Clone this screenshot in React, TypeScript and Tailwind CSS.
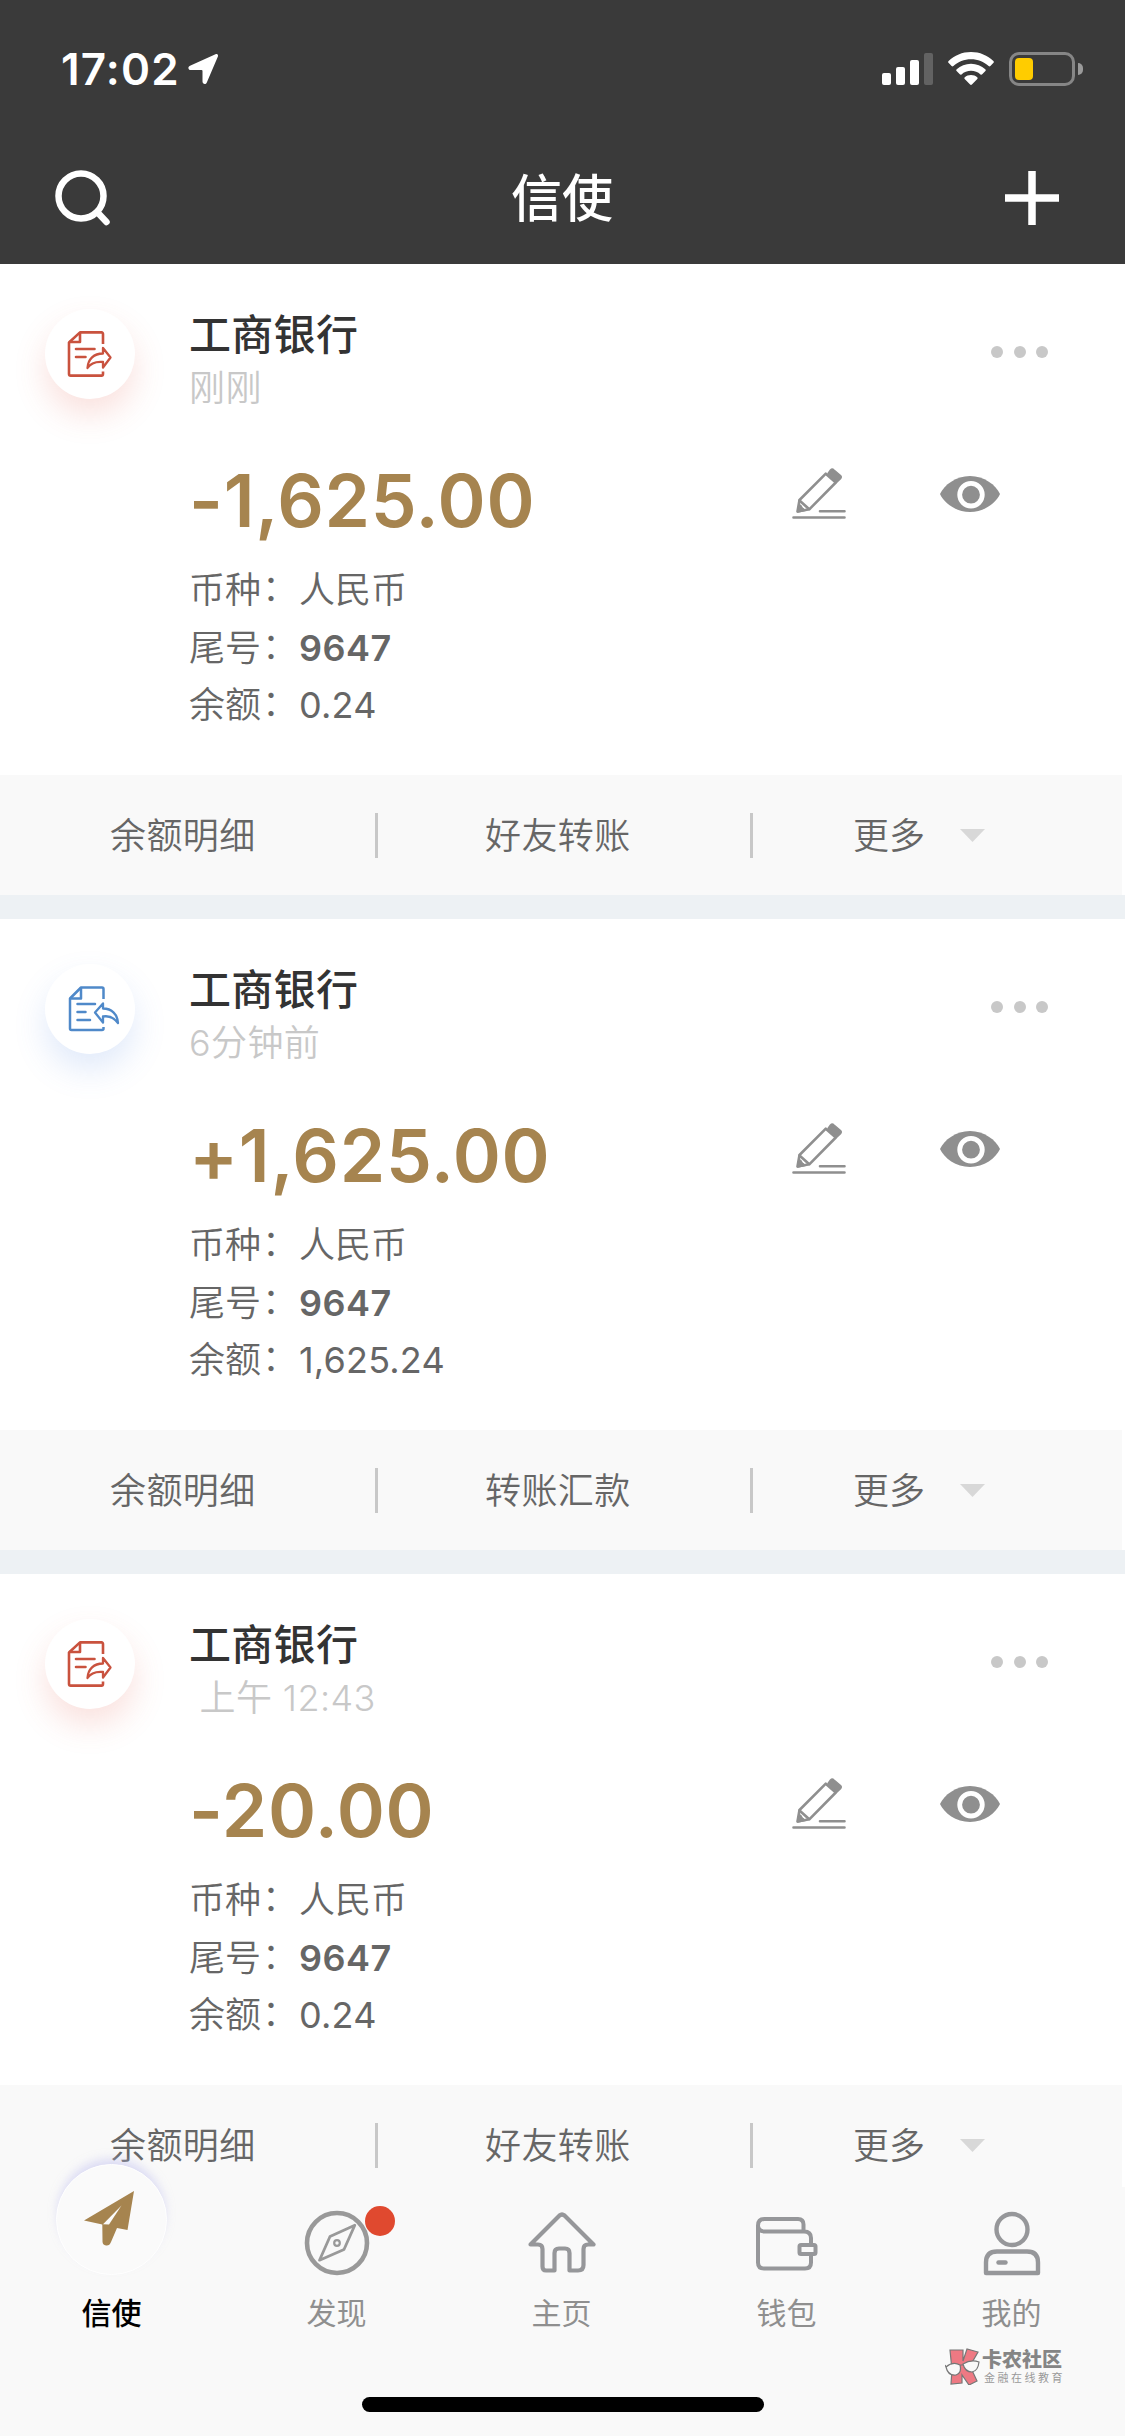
import React from "react";

type Message = {
  kind: "out" | "in";
  time: string;
  amount: string;
  balance: string;
  action: string;
};

const messages: Message[] = [
  { kind: "out", time: "刚刚", amount: "-1,625.00", balance: "0.24", action: "好友转账" },
  { kind: "in", time: "6分钟前", amount: "+1,625.00", balance: "1,625.24", action: "转账汇款" },
  { kind: "out", time: " 上午 12:43", amount: "-20.00", balance: "0.24", action: "好友转账" },
];

function StatusBar() {
  return (
    <div className="flex h-[136px] items-start justify-between pl-[61px] pr-[42px] pt-[52px]">
      <div className="flex h-[34px] items-center">
        <span className="w-[127px] text-[44px] font-semibold leading-[34px] tracking-[1.200px]">17:02</span>
        <svg width="31" height="32" viewBox="0 0 31 32" fill="white" className="-mt-px">
          <path d="M27.5 1.2 2 12.8C-.6 14 .2 17 2.800 17H13.500Q14.500 17 14.500 18V28.500C14.500 31.200 17.800 31.800 18.800 29.400L29.800 3.800C30.600 1.800 29.200.5 27.500 1.200Z" />
        </svg>
      </div>
      <div className="flex h-[34px] items-center">
        <div className="flex h-[32px] items-end gap-[5px]">
          <i className="h-[12px] w-[9px] rounded-[2px] bg-white" />
          <i className="h-[18px] w-[9px] rounded-[2px] bg-white" />
          <i className="h-[25px] w-[9px] rounded-[2px] bg-white" />
          <i className="h-[32px] w-[9px] rounded-[2px] bg-[#626262]" />
        </div>
        <svg width="46" height="34" viewBox="0 0 46 34" fill="white" className="ml-[15px]">
          <path d="M23 0C14.300 0 6.400 3.400.6 8.900c-.6.600-.6 1.300-.1 1.900l3.100 3.200c.5.500 1.200.5 1.800 0C10 9.700 16.200 7.200 23 7.200s13 2.500 17.600 6.800c.6.500 1.300.5 1.800 0l3.100-3.200c.5-.6.5-1.300-.1-1.900C39.600 3.400 31.700 0 23 0Z" />
          <path d="M23 11.700c-5.500 0-10.500 2.100-14.300 5.500-.6.600-.6 1.300-.1 1.800l3.200 3.300c.5.500 1.200.5 1.700.1 2.500-2.200 5.900-3.600 9.500-3.600s7 1.400 9.500 3.600c.5.400 1.200.4 1.700-.1l3.200-3.300c.5-.5.500-1.200-.1-1.800-3.800-3.400-8.800-5.500-14.300-5.500Z" />
          <path d="M23 22.900c-2.400 0-4.600.9-6.200 2.300-.6.500-.6 1.200-.1 1.700l5.400 5.600c.6.600 1.200.6 1.800 0l5.400-5.600c.5-.5.500-1.200-.1-1.700-1.600-1.400-3.800-2.300-6.200-2.300Z" />
        </svg>
        <div className="ml-[15px] flex h-[34px] w-[66px] items-center rounded-[10px] border-[3px] border-[#868686] pl-[3px]">
          <i className="h-[22px] w-[18px] rounded-[4px] bg-[#ffcc00]" />
        </div>
        <i className="ml-[3px] h-[12px] w-[5px] rounded-r-full bg-[#9a9a9a]" />
      </div>
    </div>
  );
}

function Header() {
  return (
    <header className="h-[265px] border-b border-[#b5b5b5] bg-[#3a3a3a] text-white">
      <StatusBar />
      <div className="flex h-[124px] items-center justify-between pl-[55px] pr-[66px]">
        <div className="w-[64px]">
          <svg width="56" height="56" viewBox="0 0 56 56" fill="none" stroke="white" strokeWidth="6.500" strokeLinecap="round">
            <circle cx="26" cy="26" r="22.500" />
            <path d="m44 44 7.500 8" />
          </svg>
        </div>
        <h1 className="pt-[2px] text-[51px] font-medium leading-[60px]">信使</h1>
        <svg width="54" height="54" viewBox="0 0 54 54" stroke="white" strokeWidth="7.500">
          <path d="M27 0V54M0 27H54" />
        </svg>
      </div>
    </header>
  );
}

function OutIcon() {
  return (
    <svg width="54" height="46" viewBox="0 0 54 46" fill="none" stroke="#c9523e" strokeWidth="2.600" strokeLinejoin="round" strokeLinecap="butt">
      <path d="M36 13V3Q36 1.400 34.500 1.400H13L2 11.500V43Q2 44.600 3.700 44.600H34.500Q36 44.600 36 43V40.500" />
      <path d="M13 1.400V11H2" />
      <path d="M9 18H27.500M9 26H18.500" strokeLinecap="round" />
      <path d="M36 17 43.500 26.500 36 36.500V31C30 30.500 24 31.500 20.500 37C21 28 27 22.500 36 22.500Z" strokeWidth="2.300" />
    </svg>
  );
}

function InIcon() {
  return (
    <svg width="54" height="46" viewBox="0 0 54 46" fill="none" stroke="#4f89c9" strokeWidth="2.500" strokeLinejoin="round">
      <path d="M36.500 13V3Q36.500 1.500 35 1.500H14L3 12.500V42.500Q3 44 4.500 44H35Q36.500 44 36.500 42.500V41" />
      <path d="M14 1.500V12.500H3" />
      <path d="M10.500 18H28M10.500 26H18.500M10.500 34H23" strokeLinecap="round" />
      <path d="M36 17.500 28 26.500 36 36.500V30.500C42 29.500 47 31.500 51 37C50.500 28.500 45 22.500 36 22.500Z" strokeWidth="2.300" />
    </svg>
  );
}

function PencilIcon() {
  return (
    <svg width="54" height="52" viewBox="0 0 54 52" fill="none" stroke="#8f8f8f" strokeWidth="2.600" strokeLinejoin="round" strokeLinecap="round">
      <path d="M7.500 32 33.800 5.700 43.800 14.500 17.300 41.300 5.500 43.500Z" />
      <path d="M7.500 32.500 17 41" />
      <path d="M5.500 44 6.800 36.500Q9.500 36.500 10.200 39.500L13.500 42.300Z" fill="#8f8f8f" strokeWidth="1" />
      <path d="M36 5.500 38.500 2Q40.200.3 42 2L48.500 7.500Q50 9 48.500 10.800L44.500 14.500Z" fill="#8f8f8f" strokeWidth="1.500" />
      <path d="M28 43.300H52.500M1.500 49.500H52.500" />
    </svg>
  );
}

function EyeIcon() {
  return (
    <svg width="60" height="36" viewBox="0 0 60 36">
      <path d="M0 18C4 9 16 0 30 0S56 9 60 18C56 27 44 36 30 36S4 27 0 18Z" fill="#8f8f8f" />
      <circle cx="31" cy="18.700" r="11.300" fill="#8f8f8f" stroke="white" strokeWidth="4.800" />
    </svg>
  );
}

function InfoRow({ label, children }: { label: string; children: React.ReactNode }) {
  return (
    <div className="flex h-[57.500px] items-center text-[36px] leading-[57px] text-[#666]">
      <span className="w-[110px] font-[350]">
        {label}
        <span className="relative -top-[2px] left-px">：</span>
      </span>
      {children}
    </div>
  );
}

function Card({ m }: { m: Message }) {
  return (
    <article className="mb-[24px] bg-white">
      <div className="flex h-[511px]">
        <div className="w-[189px] shrink-0 pl-[45px] pt-[45px]">
          <div
            className={
              m.kind === "out"
                ? "flex size-[90px] items-center rounded-full bg-white pl-[22px] shadow-[0_16px_32px_rgba(226,90,70,0.180)]"
                : "flex size-[90px] items-center rounded-full bg-white pl-[22px] shadow-[0_16px_32px_rgba(90,140,226,0.180)]"
            }
          >
            {m.kind === "out" ? <OutIcon /> : <InIcon />}
          </div>
        </div>
        <div className="flex-1 pt-[43px]">
          <h2 className="h-[56px] text-[42px] font-medium leading-[56px] tracking-[0.300px] text-[#333]">工商银行</h2>
          <p className="h-[50px] whitespace-pre text-[36px] font-[350] leading-[50px] tracking-[0.400px] text-[#c8c8c8]">{m.time}</p>
          <p className="mt-[46px] h-[84px] whitespace-nowrap text-[73px] font-semibold leading-[84px] tracking-[0.700px] text-[#a6844f]">{m.amount}</p>
          <div className="mt-[19px]">
            <InfoRow label="币种">
              <span className="font-[350]">人民币</span>
            </InfoRow>
            <InfoRow label="尾号">
              <span className="font-semibold tracking-[0.500px]">9647</span>
            </InfoRow>
            <InfoRow label="余额">
              <span className="font-normal tracking-[0.200px]">{m.balance}</span>
            </InfoRow>
          </div>
        </div>
        <div className="w-[333px] shrink-0">
          <div className="flex justify-end gap-[10.500px] pr-[77px] pt-[82px]">
            <i className="size-[12px] rounded-full bg-[#c8c8c8]" />
            <i className="size-[12px] rounded-full bg-[#c8c8c8]" />
            <i className="size-[12px] rounded-full bg-[#c8c8c8]" />
          </div>
          <div className="mt-[110px] flex items-center gap-[94px]">
            <PencilIcon />
            <EyeIcon />
          </div>
        </div>
      </div>
      <div className="mr-[3px] flex h-[120px] items-center bg-[#f9f9f9] text-[36px] font-[350] leading-[60px] text-[#666]">
        <span className="w-[375px] pl-[110px] pt-[2px] tracking-[0.400px]">余额明细</span>
        <i className="h-[45px] w-[3px] bg-[#c8c8c8]" />
        <span className="w-[372px] pl-[107px] pt-[2px] tracking-[0.400px]">{m.action}</span>
        <i className="h-[45px] w-[3px] bg-[#c8c8c8]" />
        <span className="ml-[100px] pt-[2px]">更多</span>
        <svg width="25" height="13" viewBox="0 0 25 13" className="ml-[35px]">
          <path d="M0 0H25L12.500 13Z" fill="#d8d8d8" />
        </svg>
      </div>
    </article>
  );
}

function Compass() {
  return (
    <svg width="66" height="66" viewBox="0 0 66 66" fill="none" stroke="#999" strokeLinejoin="round">
      <circle cx="33" cy="33" r="30" strokeWidth="4.600" />
      <path d="M50.800 15.200 26 26.500 15.500 50.200 40 39.500Z" strokeWidth="2.800" />
      <circle cx="33" cy="33" r="2.800" strokeWidth="2.200" />
    </svg>
  );
}

function HomeIcon() {
  return (
    <svg width="68" height="62" viewBox="0 0 68 62" fill="none" stroke="#96979a" strokeWidth="4.200" strokeLinejoin="round">
      <path d="M31.500 3.500Q34 1.500 36.500 3.500L65.500 32.500H60Q55.500 32.500 55.500 37V53Q55.500 58.500 50 58.500H41.500V41Q41.500 36.500 37 36.500H31Q26.500 36.500 26.500 41V58.500H18Q14.500 58.500 14.500 54.500V37Q14.500 32.500 10 32.500H2.500Z" />
    </svg>
  );
}

function WalletIcon() {
  return (
    <svg width="62" height="54" viewBox="0 0 62 54" fill="none" stroke="#96979a" strokeWidth="4" className="mt-[2px]">
      <path d="M47.500 15V7.500Q47.500 2 42 2H8.500Q2 2 2 8.500V45.500Q2 51.500 8 51.500H49Q55 51.500 55 45.500V37M2 8.500Q2 14.500 9 14.500H48Q55 14.500 55 21V28" />
      <rect x="43.500" y="28" width="16" height="9" rx="1.500" />
    </svg>
  );
}

function UserIcon() {
  return (
    <svg width="58" height="66" viewBox="0 0 58 66" fill="none" stroke="#96979a" strokeWidth="4.400" strokeLinejoin="round" className="mt-[2px]">
      <circle cx="29" cy="18.500" r="15.500" />
      <path d="M3 62V51.500Q3 40.500 14 40.500H44Q55 40.500 55 51.500V62Z" />
      <path d="M15.500 51.500H22.500" strokeLinecap="round" />
    </svg>
  );
}

function Tab({ label, children }: { label: string; children: React.ReactNode }) {
  return (
    <div className="flex flex-1 flex-col items-center">
      <div className="relative flex h-[66px] items-center">{children}</div>
      <span className="mt-[15px] text-[30px] leading-[44px] text-[#8f8f8f]">{label}</span>
    </div>
  );
}

function Watermark() {
  return (
    <div className="absolute left-[945px] top-[161px] flex items-start gap-[2px]">
      <svg width="35" height="37" viewBox="0 0 35 37" stroke="#777" strokeWidth="1.200">
        <path d="M5 2H18V13L22 1 33 4 25 18 32 33 24 37 17 27V35L6 36 7 22Z" fill="#ee7983" />
        <path d="M1 19Q8 13 15 17Q17 25 11 27Q3 28 1 19ZM18 16Q26 11 34 14Q33 23 27 24Q20 24 18 16ZM15 17H18M0 17 1 19" fill="#f9f9f9" />
      </svg>
      <div className="flex flex-col pt-px">
        <span className="text-[20px] font-black leading-[23px] text-[#858585]">卡农社区</span>
        <span className="pl-[2px] text-[11px] leading-[12px] tracking-[2.500px] text-[#999]">金融在线教育</span>
      </div>
    </div>
  );
}

function TabBar() {
  return (
    <nav className="absolute inset-x-0 bottom-0 h-[249px] bg-[#f9f9f9]">
      <div className="-ml-px flex w-[1125px] pt-[23px]">
        <div className="flex flex-1 flex-col items-center">
          <div className="-mt-[46px] flex size-[111px] items-center justify-center rounded-full border border-white bg-[#fafafa] shadow-[0_-7px_10px_-2px_rgba(190,190,240,0.500)]">
            <svg width="50" height="55" viewBox="0 0 50 55" fill="#a6844f" className="-ml-[5px] -mt-[2px]">
              <path d="M50 0 43.500 39 33 37 27 51Q25.500 55 22 54.500 18.500 54 18.500 50.500L18.300 33.500 0 29.500Z" />
              <path d="M37.500 14.500 19 33.300 25 33.500Z" fill="#fafafa" />
            </svg>
          </div>
          <span className="mt-[16px] text-[30px] font-medium leading-[44px] text-black">信使</span>
        </div>
        <Tab label="发现">
          <Compass />
          <i className="absolute -top-[4px] left-[61px] size-[30px] rounded-full bg-[#e0492f]" />
        </Tab>
        <Tab label="主页"><HomeIcon /></Tab>
        <Tab label="钱包"><WalletIcon /></Tab>
        <Tab label="我的"><UserIcon /></Tab>
      </div>
      <Watermark />
      <div className="absolute bottom-[24px] left-[362px] h-[15px] w-[402px] rounded-full bg-black" />
    </nav>
  );
}

export default function App() {
  return (
    <div className="relative h-[2436px] w-[1125px] overflow-hidden bg-[#edf1f4] font-[Inter,'Noto_Sans_CJK_SC',sans-serif]">
      <Header />
      <main className="-mt-px">
        {messages.map((m, i) => (
          <Card key={i} m={m} />
        ))}
      </main>
      <TabBar />
    </div>
  );
}
